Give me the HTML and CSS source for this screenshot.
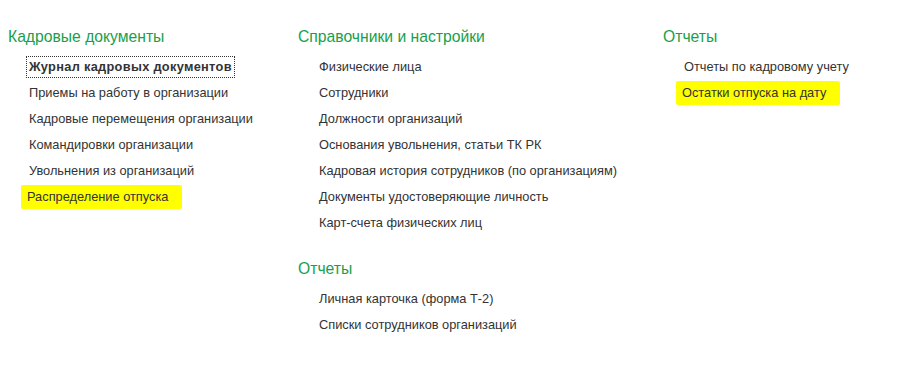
FILE: index.html
```html
<!DOCTYPE html>
<html lang="ru">
<head>
    <meta charset="UTF-8">
    <title>Кадры</title>
    <link rel="stylesheet" href="styles.css">
</head>
<body>
    <div class="panel">
        <div class="column col-docs">
            <div class="group">
                <div class="group-title">Кадровые документы</div>
                <ul class="links">
                    <li><a class="current">Журнал кадровых документов</a></li>
                    <li><a>Приемы на работу в организации</a></li>
                    <li><a>Кадровые перемещения организации</a></li>
                    <li><a>Командировки организации</a></li>
                    <li><a>Увольнения из организаций</a></li>
                    <li><a class="marked">Распределение отпуска</a></li>
                </ul>
            </div>
        </div>
        <div class="column col-refs">
            <div class="group">
                <div class="group-title">Справочники и настройки</div>
                <ul class="links">
                    <li><a>Физические лица</a></li>
                    <li><a>Сотрудники</a></li>
                    <li><a>Должности организаций</a></li>
                    <li><a>Основания увольнения, статьи ТК РК</a></li>
                    <li><a>Кадровая история сотрудников (по организациям)</a></li>
                    <li><a>Документы удостоверяющие личность</a></li>
                    <li><a>Карт-счета физических лиц</a></li>
                </ul>
            </div>
            <div class="group">
                <div class="group-title">Отчеты</div>
                <ul class="links">
                    <li><a>Личная карточка (форма Т-2)</a></li>
                    <li><a>Списки сотрудников организаций</a></li>
                </ul>
            </div>
        </div>
        <div class="column col-reports">
            <div class="group">
                <div class="group-title">Отчеты</div>
                <ul class="links">
                    <li><a>Отчеты по кадровому учету</a></li>
                    <li><a class="marked">Остатки отпуска на дату</a></li>
                </ul>
            </div>
        </div>
    </div>
</body>
</html>
```

FILE: styles.css
```css
body, html {
    margin: 0;
    padding: 0;
    background-color: #fff;
    font-family: Arial, "Liberation Sans", sans-serif;
}
.panel {
    display: flex;
    padding: 27px 0 0 8px;
}
.col-docs {
    width: 290px;
}
.col-refs {
    width: 365px;
}
.group {
    margin-bottom: 23px;
}
.group-title {
    font-size: 15.7px;
    line-height: 20px;
    color: #17a04c;
    margin-bottom: 7px;
}
.links {
    list-style-type: none;
    margin: 0;
    padding: 0 0 0 18px;
}
.links li {
    height: 26px;
    display: flex;
    align-items: center;
}
.links a {
    font-size: 12.8px;
    line-height: 18px;
    color: #333;
    padding: 1px 2px;
    border: 1px dotted transparent;
    cursor: pointer;
}
.links a.current {
    font-weight: bold;
    letter-spacing: 0.3px;
    border-color: #333;
}
.links a.marked {
    background-color: #ffff00;
    padding: 2px 13px 2px 5px;
    margin-left: -5px;
    border-radius: 2px;
}
```
